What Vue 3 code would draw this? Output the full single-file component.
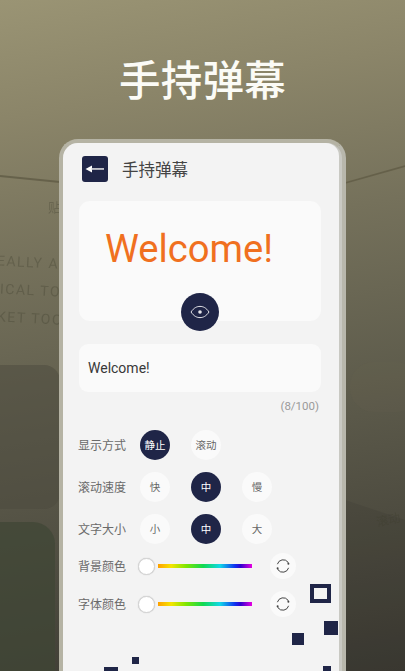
<script setup>
const rows = [
  { label: '显示方式', opts: [{ t: '静止', on: true }, { t: '滚动' }] },
  { label: '滚动速度', opts: [{ t: '快' }, { t: '中', on: true }, { t: '慢' }] },
  { label: '文字大小', opts: [{ t: '小' }, { t: '中', on: true }, { t: '大' }] },
]
const sliders = ['背景颜色', '字体颜色']
</script>

<template>
  <div class="screen">
    <div class="scenery">
      <svg class="curve" width="405" height="671" viewBox="0 0 405 671">
        <path d="M0 176 Q30 179 60 182" fill="none" stroke="#625d47" stroke-width="1.8" opacity=".85" />
        <path d="M345 183 L405 166" fill="none" stroke="#625d47" stroke-width="1.8" opacity=".85" />
        <rect x="-30" y="365" width="90" height="144" rx="16" fill="#4c4a3d" opacity=".5" />
        <rect x="-30" y="522" width="85" height="168" rx="22" fill="#3f4634" opacity=".7" />
        <rect x="350" y="362" width="70" height="50" rx="24" fill="#6a6652" opacity=".15" />
        <path d="M345 500 L405 520 L405 671 L345 671 Z" fill="#2f2d27" opacity=".15" />
      </svg>
      <span class="ghost g1">贴</span>
      <span class="ghost g2">EALLY A</span>
      <span class="ghost g3">ICAL TO</span>
      <span class="ghost g4">KET TOO</span>
      <span class="ghost g5">滚动</span>
    </div>

    <h1 class="title">手持弹幕</h1>

    <div class="phone">
      <div class="panel">
        <header class="bar">
          <span class="back">
            <svg width="20" height="10" viewBox="0 0 20 10">
              <path d="M0.5 5 L7 1.5 V8.5 Z" fill="#fff" />
              <rect x="6" y="4.2" width="13" height="1.5" fill="#e8e8e8" />
            </svg>
          </span>
          <span class="bar-title">手持弹幕</span>
        </header>

        <section class="preview">
          <div class="welcome">Welcome!</div>
          <button class="eye">
            <svg width="20" height="14" viewBox="0 0 20 14">
              <path d="M1 7 C4 2.6 7 1.4 10 1.4 C13 1.4 16 2.6 19 7 C16 11.4 13 12.6 10 12.6 C7 12.6 4 11.4 1 7 Z" fill="none" stroke="#e6e6ea" stroke-width="1" />
              <circle cx="10" cy="7" r="1.8" fill="#e6e6ea" />
            </svg>
          </button>
        </section>

        <div class="input">Welcome!</div>
        <div class="count">(8/100)</div>

        <div class="row" v-for="r in rows" :key="r.label">
          <span class="label">{{ r.label }}</span>
          <span class="opts">
            <span v-for="o in r.opts" :key="o.t" class="opt" :class="{ on: o.on }">{{ o.t }}</span>
          </span>
        </div>

        <div class="slide" v-for="s in sliders" :key="s">
          <span class="label">{{ s }}</span>
          <span class="knob"></span>
          <span class="rainbow"></span>
          <span class="refresh">
            <svg width="16" height="16" viewBox="0 0 16 16" fill="none" stroke="#444" stroke-width="1">
              <path d="M2.4 6.2 A6 6 0 0 1 13 4.2 L13.6 5.8" />
              <path d="M13.6 9.8 A6 6 0 0 1 3 11.8 L2.4 10.2" />
              <circle cx="13.4" cy="5.8" r="1" fill="#444" stroke="none" />
              <circle cx="2.6" cy="10.2" r="1" fill="#444" stroke="none" />
            </svg>
          </span>
        </div>
      </div>

      <span class="sq hollow"></span>
      <span class="sq s1"></span>
      <span class="sq s2"></span>
      <span class="sq s3"></span>
      <span class="sq s4"></span>
      <span class="sq s5"></span>
    </div>
  </div>
</template>

<style>
html, body { margin: 0; padding: 0; }
</style>

<style scoped>
.screen {
  position: relative;
  width: 405px;
  height: 671px;
  overflow: hidden;
  font-family: "Noto Sans CJK SC", Roboto, sans-serif;
  background: linear-gradient(170deg, #9a9474 0%, #8b8569 16%, #75715b 36%, #5e5c4c 60%, #3b3932 100%);
  display: flex;
  flex-direction: column;
  align-items: center;
}
.scenery { position: absolute; inset: 0; filter: blur(.5px); }
.curve { position: absolute; left: 0; top: 0; }
.ghost { position: absolute; color: rgba(60, 58, 44, .3); white-space: nowrap; font-family: Roboto, "Noto Sans CJK SC", sans-serif; font-size: 14px; letter-spacing: 1.5px; }
.g1 { left: 48px; top: 197px; font-size: 13px; }
.g2 { left: -3px; top: 254px; transform: rotate(3deg); }
.g3 { left: 0; top: 282px; transform: rotate(3deg); }
.g4 { left: -3px; top: 310px; transform: rotate(3deg); }
.g5 { left: 376px; top: 510px; font-size: 12px; transform: rotate(-12deg); letter-spacing: 0; }

.title {
  position: relative;
  flex: none;
  margin: 50px 0 0;
  height: 89px;
  font-size: 41.5px;
  line-height: 56px;
  font-weight: 500;
  color: #fbfbf6;
  letter-spacing: .2px;
}
.phone {
  position: relative;
  width: 287px;
  height: 560px;
  flex: none;
  box-sizing: border-box;
  border: 4px solid #b5b3a4;
  border-right-color: #b8b7ac;
  border-bottom: 0;
  border-radius: 19px 19px 0 0;
  background: #c9c9c3;
  padding-right: 3px;
}
.panel {
  height: 100%;
  box-sizing: border-box;
  background: #f3f3f3;
  border-radius: 15px 13px 0 0;
  padding: 13px 18px 0 16px;
}
.bar { display: flex; align-items: center; height: 26px; margin-left: 3px; }
.back {
  width: 26px;
  height: 26px;
  border-radius: 3px;
  background: #1f2547;
  display: flex;
  align-items: center;
  justify-content: center;
}
.bar-title { margin-left: 14px; font-size: 16.5px; line-height: 26px; color: #444; }

.preview {
  position: relative;
  margin-top: 19px;
  height: 120px;
  background: #fafafa;
  border-radius: 11px;
  padding: 20px 0 0 26px;
  box-sizing: border-box;
}
.welcome {
  font-family: Roboto, sans-serif;
  font-size: 38.2px;
  line-height: 56px;
  color: #f0701f;
  white-space: nowrap;
}
.eye {
  position: absolute;
  left: 102px;
  bottom: -10px;
  width: 38px;
  height: 38px;
  padding: 0;
  border: 0;
  border-radius: 50%;
  background: #1f2547;
  display: flex;
  align-items: center;
  justify-content: center;
}
.input {
  margin-top: 23px;
  height: 48px;
  background: #fafafa;
  border-radius: 9px;
  box-sizing: border-box;
  padding-left: 9px;
  font-family: Roboto, sans-serif;
  font-size: 14px;
  line-height: 48px;
  color: #383838;
}
.count {
  margin-top: 7px;
  text-align: right;
  padding-right: 2px;
  font-family: Roboto, sans-serif;
  font-size: 11.5px;
  line-height: 14px;
  color: #9a9a9a;
}
.row { display: flex; align-items: center; height: 30px; margin-top: 12px; }
.count + .row { margin-top: 17px; }
.label { width: 48px; margin-left: -1px; flex: none; font-size: 12px; line-height: 16px; color: #6a6a6a; white-space: nowrap; }
.opts { display: flex; gap: 21px; margin-left: 14px; }
.opt {
  width: 30px;
  height: 30px;
  border-radius: 50%;
  background: #fafafa;
  color: #666;
  font-size: 10.5px;
  line-height: 30px;
  text-align: center;
}
.opt.on { background: #1f2547; color: #fff; }

.slide { display: flex; align-items: center; height: 26px; margin-top: 12px; }
.row + .slide { margin-top: 9px; }
.knob {
  width: 15px;
  height: 15px;
  margin-left: 12px;
  flex: none;
  border-radius: 50%;
  background: #fff;
  border: 1px solid #d4d4d4;
  box-shadow: 0 0 1px #bbb;
}
.rainbow {
  width: 94px;
  height: 4px;
  margin-left: 3px;
  background: linear-gradient(90deg, #ffa000 0%, #f5e400 14%, #7de600 30%, #10d850 48%, #10d8e8 66%, #1030f0 82%, #3000d0 88%, #e800e0 100%);
}
.refresh {
  width: 26px;
  height: 26px;
  margin-left: 18px;
  flex: none;
  border-radius: 50%;
  background: #fafafa;
  display: flex;
  align-items: center;
  justify-content: center;
}
.sq { position: absolute; background: #1f2547; }
.hollow { left: 247px; top: 441px; width: 21px; height: 19px; box-sizing: border-box; background: transparent; border: 4px solid #1f2547; }
.s1 { left: 261px; top: 478px; width: 14px; height: 14px; }
.s2 { left: 229px; top: 490px; width: 12px; height: 12px; }
.s3 { left: 69px; top: 514px; width: 7px; height: 7px; }
.s4 { left: 41px; top: 524px; width: 14px; height: 8px; }
.s5 { left: 260px; top: 523px; width: 8px; height: 9px; }
</style>
